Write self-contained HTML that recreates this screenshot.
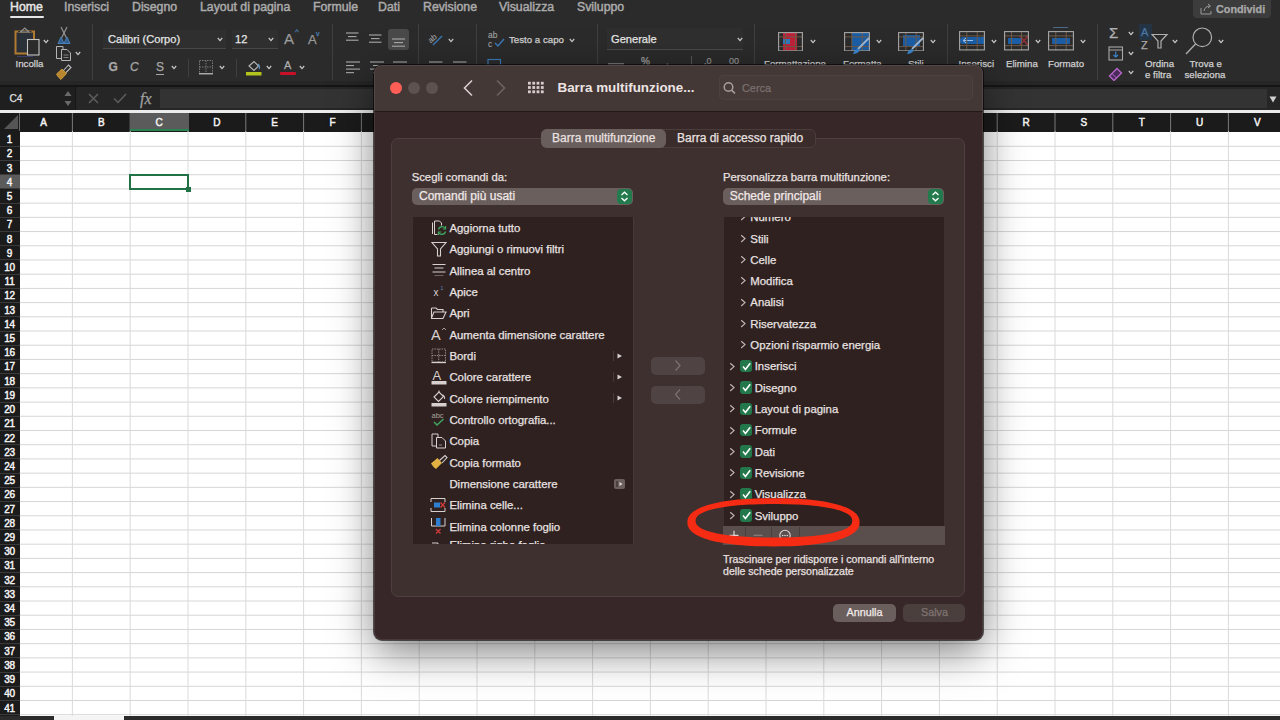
<!DOCTYPE html><html><head><meta charset="utf-8"><style>

*{margin:0;padding:0;box-sizing:border-box}
html,body{width:1280px;height:720px;overflow:hidden;background:#fff;font-family:"Liberation Sans", sans-serif}
.abs{position:absolute}
.t{position:absolute;white-space:nowrap;line-height:1;-webkit-text-stroke:0.25px currentColor}

</style></head><body>
<div class="abs" style="left:0;top:0;width:1280px;height:86px;background:#2b2b2b"></div>
<div class="abs" style="left:0;top:84px;width:1280px;height:3px;background:#151515"></div>
<div class="t" style="left:10px;top:0.5px;font-size:12.3px;color:#e6e6e6;-webkit-text-stroke:0.45px #e6e6e6">Home</div>
<div class="t" style="left:64px;top:0.5px;font-size:12.3px;color:#ababab;-webkit-text-stroke:0.45px #ababab">Inserisci</div>
<div class="t" style="left:132px;top:0.5px;font-size:12.3px;color:#ababab;-webkit-text-stroke:0.45px #ababab">Disegno</div>
<div class="t" style="left:200px;top:0.5px;font-size:12.3px;color:#ababab;-webkit-text-stroke:0.45px #ababab">Layout di pagina</div>
<div class="t" style="left:313px;top:0.5px;font-size:12.3px;color:#ababab;-webkit-text-stroke:0.45px #ababab">Formule</div>
<div class="t" style="left:378px;top:0.5px;font-size:12.3px;color:#ababab;-webkit-text-stroke:0.45px #ababab">Dati</div>
<div class="t" style="left:423px;top:0.5px;font-size:12.3px;color:#ababab;-webkit-text-stroke:0.45px #ababab">Revisione</div>
<div class="t" style="left:499px;top:0.5px;font-size:12.3px;color:#ababab;-webkit-text-stroke:0.45px #ababab">Visualizza</div>
<div class="t" style="left:577px;top:0.5px;font-size:12.3px;color:#ababab;-webkit-text-stroke:0.45px #ababab">Sviluppo</div>
<div class="abs" style="left:10px;top:16px;width:34px;height:2px;background:#e6e6e6;border-radius:1px"></div>
<div class="abs" style="left:1193px;top:0;width:78px;height:18px;background:#3c3c3c;border-radius:0 0 4px 4px"></div>
<svg class="abs" style="left:1200px;top:3px" width="13" height="12" viewBox="0 0 13 12"><path d="M1,5 V11 H11 V8" fill="none" stroke="#9a9a9a" stroke-width="1"/><path d="M4,8 Q5,3 10,3 M8,1 L10.5,3 L8,5" fill="none" stroke="#9a9a9a" stroke-width="1"/></svg>
<div class="t" style="left:1216px;top:3.5px;font-size:10.8px;font-weight:bold;color:#a9a9a9">Condividi</div>
<div class="abs" style="left:92px;top:24px;width:1px;height:56px;background:#3f3f3f"></div>
<div class="abs" style="left:332px;top:24px;width:1px;height:56px;background:#3f3f3f"></div>
<div class="abs" style="left:418px;top:24px;width:1px;height:56px;background:#3f3f3f"></div>
<div class="abs" style="left:476px;top:24px;width:1px;height:56px;background:#3f3f3f"></div>
<div class="abs" style="left:597px;top:24px;width:1px;height:56px;background:#3f3f3f"></div>
<div class="abs" style="left:754px;top:24px;width:1px;height:56px;background:#3f3f3f"></div>
<div class="abs" style="left:947px;top:24px;width:1px;height:56px;background:#3f3f3f"></div>
<div class="abs" style="left:1097px;top:24px;width:1px;height:56px;background:#3f3f3f"></div>
<div class="abs" style="left:0;top:80.5px;width:1280px;height:4px;background:#262626"></div>
<svg class="abs" style="left:13px;top:26px" width="30" height="32" viewBox="0 0 30 32"><rect x="2.5" y="5.5" width="18.5" height="22" fill="#2a3038" stroke="#b07a30" stroke-width="2"/><path d="M5,5.5 H18.5" stroke="#2a3038" stroke-width="1"/><polygon points="7.5,6 11.75,2 16,6" fill="none" stroke="#8f8f8f" stroke-width="1.2"/><rect x="14.5" y="13.5" width="11.5" height="15.5" fill="#2b2b2b" stroke="#c4c4c4" stroke-width="1.1"/><line x1="4" y1="30.5" x2="20" y2="30.5" stroke="#3a3f70" stroke-width="1"/></svg>
<svg class="abs" style="left:43px;top:38.5px" width="6" height="5" viewBox="0 0 6 5"><polyline points="0.8,1 3,3.6 5.2,1" fill="none" stroke="#c8c8c8" stroke-width="1.2"/></svg>
<div class="t" style="left:15.5px;top:58.9px;font-size:9.7px;color:#d0d0d0">Incolla</div>
<svg class="abs" style="left:56px;top:26px" width="16" height="20" viewBox="0 0 16 20"><line x1="5" y1="1" x2="10.5" y2="12" stroke="#9a9a9a" stroke-width="1.1"/><line x1="11" y1="1" x2="5.5" y2="12" stroke="#9a9a9a" stroke-width="1.1"/><path d="M2,17.5 L5,11 L8,17.5 Z M8,17.5 L11,11 L14,17.5 Z" fill="#2f5f90" stroke="#4a7fb5" stroke-width="1"/></svg>
<svg class="abs" style="left:55px;top:45px" width="17" height="17" viewBox="0 0 17 17"><path d="M1.5,1.5 H8 V13.5 H1.5 Z" fill="none" stroke="#b5b5b5" stroke-width="1"/><path d="M6.5,4.5 H12 L15.5,8 V15.5 H6.5 Z" fill="#2b2b2b" stroke="#b5b5b5" stroke-width="1"/><line x1="8.5" y1="10" x2="13.5" y2="10" stroke="#999" stroke-width="0.8"/><line x1="8.5" y1="12.5" x2="13.5" y2="12.5" stroke="#999" stroke-width="0.8"/></svg>
<svg class="abs" style="left:75px;top:50.5px" width="6" height="5" viewBox="0 0 6 5"><polyline points="0.8,1 3,3.6 5.2,1" fill="none" stroke="#c8c8c8" stroke-width="1.2"/></svg>
<svg class="abs" style="left:55px;top:63px" width="17" height="18" viewBox="0 0 17 18"><path d="M1.5,11 L7,6 L11.5,10.5 L6,16.5 Q3,14.5 1.5,11 Z" fill="#b8862e" stroke="#d9a640" stroke-width="0.8"/><path d="M8.5,7.5 L13.5,2 L16,4.5 L11,9.5" fill="none" stroke="#bdbdbd" stroke-width="1.1"/></svg>
<div class="abs" style="left:103px;top:30px;width:123px;height:19px;background:#2f2f2f;border-bottom:1px solid #474747"></div>
<div class="t" style="left:108px;top:33.5px;font-size:11.1px;color:#e6e6e6">Calibri (Corpo)</div>
<svg class="abs" style="left:217px;top:37.0px" width="6" height="5" viewBox="0 0 6 5"><polyline points="0.8,1 3,3.6 5.2,1" fill="none" stroke="#c8c8c8" stroke-width="1.2"/></svg>
<div class="abs" style="left:232px;top:30px;width:45.5px;height:19px;background:#2f2f2f;border-bottom:1px solid #474747"></div>
<div class="t" style="left:235px;top:33.5px;font-size:11.1px;color:#e6e6e6">12</div>
<svg class="abs" style="left:267.5px;top:37.0px" width="6" height="5" viewBox="0 0 6 5"><polyline points="0.8,1 3,3.6 5.2,1" fill="none" stroke="#c8c8c8" stroke-width="1.2"/></svg>
<div class="t" style="left:284px;top:31px;font-size:15px;color:#9a9a9a">A</div>
<div class="t" style="left:295px;top:28px;font-size:8px;color:#4a7fb5">^</div>
<div class="t" style="left:308px;top:33px;font-size:13px;color:#9a9a9a">A</div>
<div class="t" style="left:316px;top:30px;font-size:7px;color:#4a7fb5">v</div>
<div class="t" style="left:108.5px;top:61px;font-size:12px;font-weight:bold;color:#a8a8a8">G</div>
<div class="t" style="left:130px;top:61px;font-size:12px;font-style:italic;color:#a8a8a8">C</div>
<div class="t" style="left:156px;top:61px;font-size:12px;color:#a8a8a8">S</div>
<div class="abs" style="left:156px;top:73.5px;width:8px;height:1px;background:#a8a8a8"></div>
<svg class="abs" style="left:171px;top:64.5px" width="6" height="5" viewBox="0 0 6 5"><polyline points="0.8,1 3,3.6 5.2,1" fill="none" stroke="#c8c8c8" stroke-width="1.2"/></svg>
<div class="abs" style="left:187.5px;top:59px;width:1px;height:18px;background:#3f3f3f"></div>
<svg class="abs" style="left:199px;top:60px" width="15" height="15" viewBox="0 0 15 15"><rect x="0.5" y="0.5" width="13" height="13" fill="none" stroke="#8a8a8a" stroke-width="0.8" stroke-dasharray="1.5,1"/><line x1="7" y1="0.5" x2="7" y2="13.5" stroke="#8a8a8a" stroke-width="0.8" stroke-dasharray="1.5,1"/><line x1="0.5" y1="7" x2="13.5" y2="7" stroke="#8a8a8a" stroke-width="0.8" stroke-dasharray="1.5,1"/><line x1="0" y1="13.8" x2="14" y2="13.8" stroke="#c0c0c0" stroke-width="1.2"/></svg>
<svg class="abs" style="left:219px;top:64.5px" width="6" height="5" viewBox="0 0 6 5"><polyline points="0.8,1 3,3.6 5.2,1" fill="none" stroke="#c8c8c8" stroke-width="1.2"/></svg>
<div class="abs" style="left:235.5px;top:59px;width:1px;height:18px;background:#3f3f3f"></div>
<svg class="abs" style="left:245px;top:60px" width="18" height="16" viewBox="0 0 18 16"><path d="M4,6 L9,1.5 L13.5,6 L9,10.5 Z" fill="none" stroke="#b8b8b8" stroke-width="1.1"/><path d="M13,4 Q15.5,7 14,9" fill="none" stroke="#5a8fc0" stroke-width="1.2"/><rect x="1" y="12" width="15.5" height="3.5" fill="#b4c21e"/></svg>
<svg class="abs" style="left:266px;top:64.5px" width="6" height="5" viewBox="0 0 6 5"><polyline points="0.8,1 3,3.6 5.2,1" fill="none" stroke="#c8c8c8" stroke-width="1.2"/></svg>
<div class="t" style="left:284px;top:60px;font-size:11px;color:#b0b0b0">A</div>
<div class="abs" style="left:280px;top:71.5px;width:16px;height:3.5px;background:#c8102a;border-radius:1px"></div>
<svg class="abs" style="left:299px;top:64.5px" width="6" height="5" viewBox="0 0 6 5"><polyline points="0.8,1 3,3.6 5.2,1" fill="none" stroke="#c8c8c8" stroke-width="1.2"/></svg>
<svg class="abs" style="left:346px;top:32px" width="16" height="14" viewBox="0 0 16 14"><line x1="0" y1="1.0" x2="12.5" y2="1.0" stroke="#ababab" stroke-width="1.1"/><line x1="2" y1="4.6" x2="10.5" y2="4.6" stroke="#ababab" stroke-width="1.1"/><line x1="0" y1="8.2" x2="12.5" y2="8.2" stroke="#ababab" stroke-width="1.1"/></svg>
<svg class="abs" style="left:369px;top:34px" width="16" height="14" viewBox="0 0 16 14"><line x1="0" y1="1.0" x2="12.5" y2="1.0" stroke="#ababab" stroke-width="1.1"/><line x1="2" y1="4.6" x2="10.5" y2="4.6" stroke="#ababab" stroke-width="1.1"/><line x1="0" y1="8.2" x2="12.5" y2="8.2" stroke="#ababab" stroke-width="1.1"/></svg>
<div class="abs" style="left:388.4px;top:28.7px;width:21.1px;height:21.3px;background:#4a4a4a;border-radius:3px"></div>
<svg class="abs" style="left:392px;top:38px" width="16" height="14" viewBox="0 0 16 14"><line x1="0" y1="1.0" x2="13" y2="1.0" stroke="#ababab" stroke-width="1.1"/><line x1="2" y1="4.6" x2="11" y2="4.6" stroke="#ababab" stroke-width="1.1"/><line x1="0" y1="8.2" x2="13" y2="8.2" stroke="#ababab" stroke-width="1.1"/></svg>
<svg class="abs" style="left:345.5px;top:61px" width="16" height="14" viewBox="0 0 16 14"><line x1="0" y1="1.0" x2="14" y2="1.0" stroke="#ababab" stroke-width="1.1"/><line x1="0" y1="4.55" x2="8" y2="4.55" stroke="#ababab" stroke-width="1.1"/><line x1="0" y1="8.1" x2="14" y2="8.1" stroke="#ababab" stroke-width="1.1"/><line x1="0" y1="11.649999999999999" x2="8" y2="11.649999999999999" stroke="#ababab" stroke-width="1.1"/></svg>
<svg class="abs" style="left:369.5px;top:61px" width="16" height="14" viewBox="0 0 16 14"><line x1="0" y1="1.0" x2="14" y2="1.0" stroke="#ababab" stroke-width="1.1"/><line x1="3" y1="4.55" x2="11" y2="4.55" stroke="#ababab" stroke-width="1.1"/><line x1="0" y1="8.1" x2="14" y2="8.1" stroke="#ababab" stroke-width="1.1"/><line x1="3" y1="11.649999999999999" x2="11" y2="11.649999999999999" stroke="#ababab" stroke-width="1.1"/></svg>
<svg class="abs" style="left:392.5px;top:61px" width="16" height="14" viewBox="0 0 16 14"><line x1="0" y1="1.0" x2="14" y2="1.0" stroke="#ababab" stroke-width="1.1"/></svg>
<div class="abs" style="left:418px;top:28px;width:1px;height:18px;background:#3f3f3f"></div>
<div class="abs" style="left:418px;top:58px;width:1px;height:8px;background:#3f3f3f"></div>
<svg class="abs" style="left:427px;top:30px" width="18" height="18" viewBox="0 0 18 18"><text x="1" y="10" font-size="8" fill="#b0b0b0" font-family="Liberation Sans" transform="rotate(-40 7 8)">ab</text><line x1="6" y1="15" x2="15" y2="6" stroke="#3a78b5" stroke-width="1.5"/></svg>
<svg class="abs" style="left:448px;top:37.5px" width="6" height="5" viewBox="0 0 6 5"><polyline points="0.8,1 3,3.6 5.2,1" fill="none" stroke="#c8c8c8" stroke-width="1.2"/></svg>
<svg class="abs" style="left:428.5px;top:61px" width="16" height="14" viewBox="0 0 16 14"><line x1="0" y1="1.0" x2="13.5" y2="1.0" stroke="#ababab" stroke-width="1.1"/></svg>
<svg class="abs" style="left:452.5px;top:61px" width="16" height="14" viewBox="0 0 16 14"><line x1="0" y1="1.0" x2="13.5" y2="1.0" stroke="#ababab" stroke-width="1.1"/></svg>
<svg class="abs" style="left:487px;top:30px" width="20" height="19" viewBox="0 0 20 19"><text x="1" y="8" font-size="8.5" fill="#b0b0b0" font-family="Liberation Sans">ab</text><text x="1" y="16.5" font-size="8.5" fill="#b0b0b0" font-family="Liberation Sans">c</text><path d="M8,13 L11,16 L17,9" fill="none" stroke="#3a78b5" stroke-width="1.5"/></svg>
<div class="t" style="left:509px;top:35px;font-size:9.7px;color:#d0d0d0">Testo a capo</div>
<svg class="abs" style="left:569px;top:37.5px" width="6" height="5" viewBox="0 0 6 5"><polyline points="0.8,1 3,3.6 5.2,1" fill="none" stroke="#c8c8c8" stroke-width="1.2"/></svg>
<svg class="abs" style="left:487px;top:58px" width="15" height="8" viewBox="0 0 15 8"><rect x="1" y="1.5" width="12.5" height="6" fill="none" stroke="#3a78b5" stroke-width="1.2"/></svg>
<div class="abs" style="left:607.2px;top:27.7px;width:136px;height:21.9px;background:#2f2f2f;border-bottom:1px solid #4a4a4a"></div>
<div class="t" style="left:611px;top:33.5px;font-size:11.1px;color:#e6e6e6">Generale</div>
<svg class="abs" style="left:736.5px;top:37.0px" width="6" height="5" viewBox="0 0 6 5"><polyline points="0.8,1 3,3.6 5.2,1" fill="none" stroke="#c8c8c8" stroke-width="1.2"/></svg>
<svg class="abs" style="left:608px;top:62.5px" width="16" height="14" viewBox="0 0 16 14"><line x1="0" y1="1.0" x2="16" y2="1.0" stroke="#b0b0b0" stroke-width="1.1"/></svg>
<div class="t" style="left:641px;top:56.5px;font-size:10px;color:#a0a0a0">%</div>
<div class="t" style="left:666px;top:56.5px;font-size:10px;color:#a0a0a0">,</div>
<div class="abs" style="left:691px;top:56px;width:1px;height:9px;background:#555"></div>
<div class="t" style="left:704px;top:56.5px;font-size:9px;color:#909090">,0</div>
<div class="t" style="left:729px;top:56.5px;font-size:9px;color:#909090">00</div>
<svg class="abs" style="left:778px;top:31.5px" width="25" height="19.5" viewBox="0 0 25 19.5"><rect x="5" y="1" width="14" height="17.5" fill="#c0213a"/><rect x="5" y="7" width="7" height="5" fill="#2f7ab8"/><line x1="7.5" y1="0" x2="7.5" y2="19.5" stroke="#6f5a48" stroke-width="1"/><line x1="17.5" y1="0" x2="17.5" y2="19.5" stroke="#6f5a48" stroke-width="1"/><line x1="0" y1="4.9" x2="25" y2="4.9" stroke="#6f5a48" stroke-width="1"/><line x1="0" y1="14.6" x2="25" y2="14.6" stroke="#6f5a48" stroke-width="1"/><rect x="0.6" y="0.6" width="23.8" height="18.3" fill="none" stroke="#a8a8a8" stroke-width="1.1"/></svg>
<svg class="abs" style="left:810px;top:39.0px" width="6" height="5" viewBox="0 0 6 5"><polyline points="0.8,1 3,3.6 5.2,1" fill="none" stroke="#c8c8c8" stroke-width="1.2"/></svg>
<svg class="abs" style="left:844px;top:31.5px" width="26" height="19.5" viewBox="0 0 26 19.5"><rect x="8" y="1" width="17" height="17.5" fill="#1b5ea6"/><line x1="7.8" y1="0" x2="7.8" y2="19.5" stroke="#6f5a48" stroke-width="1"/><line x1="18.2" y1="0" x2="18.2" y2="19.5" stroke="#6f5a48" stroke-width="1"/><line x1="0" y1="4.9" x2="26" y2="4.9" stroke="#6f5a48" stroke-width="1"/><line x1="0" y1="14.6" x2="26" y2="14.6" stroke="#6f5a48" stroke-width="1"/><rect x="0.6" y="0.6" width="24.8" height="18.3" fill="none" stroke="#a8a8a8" stroke-width="1.1"/></svg>
<svg class="abs" style="left:850px;top:36px" width="22" height="20" viewBox="0 0 22 20"><line x1="19" y1="2" x2="8" y2="13" stroke="#a0b8d0" stroke-width="1.8"/><path d="M8,13 Q4,14 3,18 Q7,18 9.5,15 Z" fill="#3a86d0"/></svg>
<svg class="abs" style="left:876px;top:39.0px" width="6" height="5" viewBox="0 0 6 5"><polyline points="0.8,1 3,3.6 5.2,1" fill="none" stroke="#c8c8c8" stroke-width="1.2"/></svg>
<svg class="abs" style="left:898px;top:31.5px" width="26" height="19.5" viewBox="0 0 26 19.5"><rect x="5" y="3" width="17" height="11" fill="#1b5ea6"/><line x1="7.8" y1="0" x2="7.8" y2="19.5" stroke="#6f5a48" stroke-width="1"/><line x1="18.2" y1="0" x2="18.2" y2="19.5" stroke="#6f5a48" stroke-width="1"/><line x1="0" y1="4.9" x2="26" y2="4.9" stroke="#6f5a48" stroke-width="1"/><line x1="0" y1="14.6" x2="26" y2="14.6" stroke="#6f5a48" stroke-width="1"/><rect x="0.6" y="0.6" width="24.8" height="18.3" fill="none" stroke="#a8a8a8" stroke-width="1.1"/></svg>
<svg class="abs" style="left:904px;top:36px" width="22" height="20" viewBox="0 0 22 20"><line x1="19" y1="2" x2="8" y2="13" stroke="#a0b8d0" stroke-width="1.8"/><path d="M8,13 Q4,14 3,18 Q7,18 9.5,15 Z" fill="#3a86d0"/></svg>
<svg class="abs" style="left:930px;top:39.0px" width="6" height="5" viewBox="0 0 6 5"><polyline points="0.8,1 3,3.6 5.2,1" fill="none" stroke="#c8c8c8" stroke-width="1.2"/></svg>
<div class="t" style="left:764px;top:58.9px;font-size:9.7px;color:#d0d0d0">Formattazione</div>
<div class="t" style="left:843px;top:58.9px;font-size:9.7px;color:#d0d0d0">Formatta</div>
<div class="t" style="left:908px;top:58.9px;font-size:9.7px;color:#d0d0d0">Stili</div>
<svg class="abs" style="left:959px;top:31px" width="26" height="19.5" viewBox="0 0 26 19.5"><rect x="1" y="6" width="27" height="7" rx="3" fill="#1b5ea6"/><path d="M4,9.5 H14 M4,9.5 L7,7 M4,9.5 L7,12" stroke="#9ec3ea" stroke-width="1" fill="none"/><line x1="7.8" y1="0" x2="7.8" y2="19.5" stroke="#6f5a48" stroke-width="1"/><line x1="18.2" y1="0" x2="18.2" y2="19.5" stroke="#6f5a48" stroke-width="1"/><line x1="0" y1="4.9" x2="26" y2="4.9" stroke="#6f5a48" stroke-width="1"/><line x1="0" y1="14.6" x2="26" y2="14.6" stroke="#6f5a48" stroke-width="1"/><rect x="0.6" y="0.6" width="24.8" height="18.3" fill="none" stroke="#a8a8a8" stroke-width="1.1"/></svg>
<svg class="abs" style="left:991px;top:39.0px" width="6" height="5" viewBox="0 0 6 5"><polyline points="0.8,1 3,3.6 5.2,1" fill="none" stroke="#c8c8c8" stroke-width="1.2"/></svg>
<svg class="abs" style="left:1004px;top:31px" width="25" height="19.5" viewBox="0 0 25 19.5"><rect x="4" y="7" width="14" height="6" fill="#1b5ea6"/><path d="M16,5 L24,14 M24,5 L16,14" stroke="#8e2f36" stroke-width="1.8"/><line x1="7.5" y1="0" x2="7.5" y2="19.5" stroke="#6f5a48" stroke-width="1"/><line x1="17.5" y1="0" x2="17.5" y2="19.5" stroke="#6f5a48" stroke-width="1"/><line x1="0" y1="4.9" x2="25" y2="4.9" stroke="#6f5a48" stroke-width="1"/><line x1="0" y1="14.6" x2="25" y2="14.6" stroke="#6f5a48" stroke-width="1"/><rect x="0.6" y="0.6" width="23.8" height="18.3" fill="none" stroke="#a8a8a8" stroke-width="1.1"/></svg>
<svg class="abs" style="left:1035px;top:39.0px" width="6" height="5" viewBox="0 0 6 5"><polyline points="0.8,1 3,3.6 5.2,1" fill="none" stroke="#c8c8c8" stroke-width="1.2"/></svg>
<svg class="abs" style="left:1048px;top:31px" width="26" height="19.5" viewBox="0 0 26 19.5"><rect x="4" y="7" width="18" height="6" fill="#1b5ea6"/><line x1="7.8" y1="0" x2="7.8" y2="19.5" stroke="#6f5a48" stroke-width="1"/><line x1="18.2" y1="0" x2="18.2" y2="19.5" stroke="#6f5a48" stroke-width="1"/><line x1="0" y1="4.9" x2="26" y2="4.9" stroke="#6f5a48" stroke-width="1"/><line x1="0" y1="14.6" x2="26" y2="14.6" stroke="#6f5a48" stroke-width="1"/><rect x="0.6" y="0.6" width="24.8" height="18.3" fill="none" stroke="#a8a8a8" stroke-width="1.1"/></svg>
<div class="abs" style="left:1053px;top:26.5px;width:15px;height:1px;background:#4a6a8a"></div>
<svg class="abs" style="left:1080px;top:39.0px" width="6" height="5" viewBox="0 0 6 5"><polyline points="0.8,1 3,3.6 5.2,1" fill="none" stroke="#c8c8c8" stroke-width="1.2"/></svg>
<div class="t" style="left:958.5px;top:58.9px;font-size:9.7px;color:#d0d0d0">Inserisci</div>
<div class="t" style="left:1006px;top:58.9px;font-size:9.7px;color:#d0d0d0">Elimina</div>
<div class="t" style="left:1048px;top:58.9px;font-size:9.7px;color:#d0d0d0">Formato</div>
<div class="t" style="left:1109px;top:25px;font-size:15px;color:#b0b0b0">&#931;</div>
<svg class="abs" style="left:1128px;top:30.5px" width="6" height="5" viewBox="0 0 6 5"><polyline points="0.8,1 3,3.6 5.2,1" fill="none" stroke="#c8c8c8" stroke-width="1.2"/></svg>
<svg class="abs" style="left:1108px;top:46px" width="16" height="15" viewBox="0 0 16 15"><rect x="1" y="1" width="13.5" height="13" fill="none" stroke="#a8a8a8" stroke-width="1.1"/><line x1="1" y1="4" x2="14.5" y2="4" stroke="#a8a8a8" stroke-width="1"/><path d="M7.75,5.5 V11 M5.5,9 L7.75,11 L10,9" stroke="#3a86d0" stroke-width="1.1" fill="none"/></svg>
<svg class="abs" style="left:1128px;top:50.5px" width="6" height="5" viewBox="0 0 6 5"><polyline points="0.8,1 3,3.6 5.2,1" fill="none" stroke="#c8c8c8" stroke-width="1.2"/></svg>
<svg class="abs" style="left:1107px;top:65px" width="17" height="16" viewBox="0 0 17 16"><path d="M2.5,11 L10,3.5 L14.5,8 L7,15.5 Z" fill="#4a2a5a" stroke="#b565c8" stroke-width="1.4"/><path d="M5,8.5 L9.5,13" stroke="#b565c8" stroke-width="1"/></svg>
<svg class="abs" style="left:1128px;top:69.5px" width="6" height="5" viewBox="0 0 6 5"><polyline points="0.8,1 3,3.6 5.2,1" fill="none" stroke="#c8c8c8" stroke-width="1.2"/></svg>
<div class="abs" style="left:1139px;top:24px;width:13px;height:16px;background:#253444"></div>
<div class="t" style="left:1141px;top:27px;font-size:11px;color:#4a78a8">A</div>
<div class="t" style="left:1141px;top:40px;font-size:11px;color:#a8a8a8">Z</div>
<svg class="abs" style="left:1151px;top:33px" width="18" height="17" viewBox="0 0 18 17"><path d="M1,1.5 H16 L10,8 V15 H7 V8 Z" fill="none" stroke="#b0b0b0" stroke-width="1.2"/></svg>
<svg class="abs" style="left:1172px;top:38.5px" width="6" height="5" viewBox="0 0 6 5"><polyline points="0.8,1 3,3.6 5.2,1" fill="none" stroke="#c8c8c8" stroke-width="1.2"/></svg>
<div class="t" style="left:1145px;top:58.9px;font-size:9.7px;color:#d0d0d0">Ordina</div>
<div class="t" style="left:1145px;top:69.5px;font-size:9.7px;color:#d0d0d0">e filtra</div>
<svg class="abs" style="left:1184px;top:26px" width="30" height="30" viewBox="0 0 30 30"><circle cx="18.3" cy="11.3" r="9.3" fill="none" stroke="#b0b0b0" stroke-width="1.2"/><line x1="11.5" y1="18" x2="2" y2="28" stroke="#b0b0b0" stroke-width="1.3"/></svg>
<svg class="abs" style="left:1218px;top:38.5px" width="6" height="5" viewBox="0 0 6 5"><polyline points="0.8,1 3,3.6 5.2,1" fill="none" stroke="#c8c8c8" stroke-width="1.2"/></svg>
<div class="t" style="left:1189.5px;top:58.9px;font-size:9.7px;color:#d0d0d0">Trova e</div>
<div class="t" style="left:1184.5px;top:69.5px;font-size:9.7px;color:#d0d0d0">seleziona</div>
<div class="abs" style="left:0;top:87px;width:1280px;height:23px;background:#262626"></div>
<div class="abs" style="left:0;top:87px;width:75px;height:23px;background:#1f1f1f"></div>
<div class="t" style="left:9.5px;top:93.5px;font-size:10.2px;color:#e0e0e0">C4</div>
<div class="abs" style="left:160px;top:89px;width:1107px;height:19px;background:#333"></div>
<svg class="abs" style="left:64px;top:90px" width="8" height="18" viewBox="0 0 8 18"><polygon points="0.5,6 4,1 7.5,6" fill="#6a6a6a"/><polygon points="0.5,11 4,16 7.5,11" fill="#6a6a6a"/></svg>
<div class="abs" style="left:74.5px;top:87px;width:1px;height:23px;background:#161616"></div>
<svg class="abs" style="left:88px;top:93px" width="11" height="11" viewBox="0 0 11 11"><path d="M1,1 L10,10 M10,1 L1,10" stroke="#5e5e5e" stroke-width="1.5"/></svg>
<svg class="abs" style="left:113px;top:93px" width="14" height="11" viewBox="0 0 14 11"><path d="M1,5.5 L5,9.5 L13,1" fill="none" stroke="#5e5e5e" stroke-width="1.5"/></svg>
<div class="t" style="left:140px;top:90.5px;font-size:16px;font-style:italic;font-family:Liberation Serif;color:#a0a0a0">fx</div>
<svg class="abs" style="left:1269px;top:96px" width="8" height="7" viewBox="0 0 8 7"><polygon points="0.5,0.5 7.5,0.5 4,6.5" fill="#d0d0d0"/></svg>
<div class="abs" style="left:0;top:110px;width:1280px;height:2.8px;background:#ececec"></div>
<div class="abs" style="left:0;top:112.5px;width:1280px;height:19px;background:#1b1b1b"></div>
<div class="abs" style="left:0;top:131px;width:19.6px;height:589px;background:#1b1b1b"></div>
<svg class="abs" style="left:0;top:0" width="1280" height="720"><line x1="19.6" x2="1280" y1="146.30" y2="146.30" stroke="#d6d6d6" stroke-width="1"/><line x1="19.6" x2="1280" y1="160.51" y2="160.51" stroke="#d6d6d6" stroke-width="1"/><line x1="19.6" x2="1280" y1="174.72" y2="174.72" stroke="#d6d6d6" stroke-width="1"/><line x1="19.6" x2="1280" y1="188.93" y2="188.93" stroke="#d6d6d6" stroke-width="1"/><line x1="19.6" x2="1280" y1="203.14" y2="203.14" stroke="#d6d6d6" stroke-width="1"/><line x1="19.6" x2="1280" y1="217.35" y2="217.35" stroke="#d6d6d6" stroke-width="1"/><line x1="19.6" x2="1280" y1="231.56" y2="231.56" stroke="#d6d6d6" stroke-width="1"/><line x1="19.6" x2="1280" y1="245.77" y2="245.77" stroke="#d6d6d6" stroke-width="1"/><line x1="19.6" x2="1280" y1="259.98" y2="259.98" stroke="#d6d6d6" stroke-width="1"/><line x1="19.6" x2="1280" y1="274.19" y2="274.19" stroke="#d6d6d6" stroke-width="1"/><line x1="19.6" x2="1280" y1="288.40" y2="288.40" stroke="#d6d6d6" stroke-width="1"/><line x1="19.6" x2="1280" y1="302.61" y2="302.61" stroke="#d6d6d6" stroke-width="1"/><line x1="19.6" x2="1280" y1="316.82" y2="316.82" stroke="#d6d6d6" stroke-width="1"/><line x1="19.6" x2="1280" y1="331.03" y2="331.03" stroke="#d6d6d6" stroke-width="1"/><line x1="19.6" x2="1280" y1="345.24" y2="345.24" stroke="#d6d6d6" stroke-width="1"/><line x1="19.6" x2="1280" y1="359.45" y2="359.45" stroke="#d6d6d6" stroke-width="1"/><line x1="19.6" x2="1280" y1="373.66" y2="373.66" stroke="#d6d6d6" stroke-width="1"/><line x1="19.6" x2="1280" y1="387.87" y2="387.87" stroke="#d6d6d6" stroke-width="1"/><line x1="19.6" x2="1280" y1="402.08" y2="402.08" stroke="#d6d6d6" stroke-width="1"/><line x1="19.6" x2="1280" y1="416.29" y2="416.29" stroke="#d6d6d6" stroke-width="1"/><line x1="19.6" x2="1280" y1="430.50" y2="430.50" stroke="#d6d6d6" stroke-width="1"/><line x1="19.6" x2="1280" y1="444.71" y2="444.71" stroke="#d6d6d6" stroke-width="1"/><line x1="19.6" x2="1280" y1="458.92" y2="458.92" stroke="#d6d6d6" stroke-width="1"/><line x1="19.6" x2="1280" y1="473.13" y2="473.13" stroke="#d6d6d6" stroke-width="1"/><line x1="19.6" x2="1280" y1="487.34" y2="487.34" stroke="#d6d6d6" stroke-width="1"/><line x1="19.6" x2="1280" y1="501.55" y2="501.55" stroke="#d6d6d6" stroke-width="1"/><line x1="19.6" x2="1280" y1="515.76" y2="515.76" stroke="#d6d6d6" stroke-width="1"/><line x1="19.6" x2="1280" y1="529.97" y2="529.97" stroke="#d6d6d6" stroke-width="1"/><line x1="19.6" x2="1280" y1="544.18" y2="544.18" stroke="#d6d6d6" stroke-width="1"/><line x1="19.6" x2="1280" y1="558.39" y2="558.39" stroke="#d6d6d6" stroke-width="1"/><line x1="19.6" x2="1280" y1="572.60" y2="572.60" stroke="#d6d6d6" stroke-width="1"/><line x1="19.6" x2="1280" y1="586.81" y2="586.81" stroke="#d6d6d6" stroke-width="1"/><line x1="19.6" x2="1280" y1="601.02" y2="601.02" stroke="#d6d6d6" stroke-width="1"/><line x1="19.6" x2="1280" y1="615.23" y2="615.23" stroke="#d6d6d6" stroke-width="1"/><line x1="19.6" x2="1280" y1="629.44" y2="629.44" stroke="#d6d6d6" stroke-width="1"/><line x1="19.6" x2="1280" y1="643.65" y2="643.65" stroke="#d6d6d6" stroke-width="1"/><line x1="19.6" x2="1280" y1="657.86" y2="657.86" stroke="#d6d6d6" stroke-width="1"/><line x1="19.6" x2="1280" y1="672.07" y2="672.07" stroke="#d6d6d6" stroke-width="1"/><line x1="19.6" x2="1280" y1="686.28" y2="686.28" stroke="#d6d6d6" stroke-width="1"/><line x1="19.6" x2="1280" y1="700.49" y2="700.49" stroke="#d6d6d6" stroke-width="1"/><line x1="19.6" x2="1280" y1="714.70" y2="714.70" stroke="#d6d6d6" stroke-width="1"/><line x1="19.6" x2="1280" y1="728.91" y2="728.91" stroke="#d6d6d6" stroke-width="1"/><line x1="72.40" x2="72.40" y1="131" y2="716" stroke="#dadada" stroke-width="1"/><line x1="72.40" x2="72.40" y1="113" y2="131" stroke="#7a7a7a" stroke-width="1"/><line x1="130.20" x2="130.20" y1="131" y2="716" stroke="#dadada" stroke-width="1"/><line x1="130.20" x2="130.20" y1="113" y2="131" stroke="#7a7a7a" stroke-width="1"/><line x1="188.00" x2="188.00" y1="131" y2="716" stroke="#dadada" stroke-width="1"/><line x1="188.00" x2="188.00" y1="113" y2="131" stroke="#7a7a7a" stroke-width="1"/><line x1="245.80" x2="245.80" y1="131" y2="716" stroke="#dadada" stroke-width="1"/><line x1="245.80" x2="245.80" y1="113" y2="131" stroke="#7a7a7a" stroke-width="1"/><line x1="303.60" x2="303.60" y1="131" y2="716" stroke="#dadada" stroke-width="1"/><line x1="303.60" x2="303.60" y1="113" y2="131" stroke="#7a7a7a" stroke-width="1"/><line x1="361.40" x2="361.40" y1="131" y2="716" stroke="#dadada" stroke-width="1"/><line x1="361.40" x2="361.40" y1="113" y2="131" stroke="#7a7a7a" stroke-width="1"/><line x1="419.20" x2="419.20" y1="131" y2="716" stroke="#dadada" stroke-width="1"/><line x1="419.20" x2="419.20" y1="113" y2="131" stroke="#7a7a7a" stroke-width="1"/><line x1="477.00" x2="477.00" y1="131" y2="716" stroke="#dadada" stroke-width="1"/><line x1="477.00" x2="477.00" y1="113" y2="131" stroke="#7a7a7a" stroke-width="1"/><line x1="534.80" x2="534.80" y1="131" y2="716" stroke="#dadada" stroke-width="1"/><line x1="534.80" x2="534.80" y1="113" y2="131" stroke="#7a7a7a" stroke-width="1"/><line x1="592.60" x2="592.60" y1="131" y2="716" stroke="#dadada" stroke-width="1"/><line x1="592.60" x2="592.60" y1="113" y2="131" stroke="#7a7a7a" stroke-width="1"/><line x1="650.40" x2="650.40" y1="131" y2="716" stroke="#dadada" stroke-width="1"/><line x1="650.40" x2="650.40" y1="113" y2="131" stroke="#7a7a7a" stroke-width="1"/><line x1="708.20" x2="708.20" y1="131" y2="716" stroke="#dadada" stroke-width="1"/><line x1="708.20" x2="708.20" y1="113" y2="131" stroke="#7a7a7a" stroke-width="1"/><line x1="766.00" x2="766.00" y1="131" y2="716" stroke="#dadada" stroke-width="1"/><line x1="766.00" x2="766.00" y1="113" y2="131" stroke="#7a7a7a" stroke-width="1"/><line x1="823.80" x2="823.80" y1="131" y2="716" stroke="#dadada" stroke-width="1"/><line x1="823.80" x2="823.80" y1="113" y2="131" stroke="#7a7a7a" stroke-width="1"/><line x1="881.60" x2="881.60" y1="131" y2="716" stroke="#dadada" stroke-width="1"/><line x1="881.60" x2="881.60" y1="113" y2="131" stroke="#7a7a7a" stroke-width="1"/><line x1="939.40" x2="939.40" y1="131" y2="716" stroke="#dadada" stroke-width="1"/><line x1="939.40" x2="939.40" y1="113" y2="131" stroke="#7a7a7a" stroke-width="1"/><line x1="997.20" x2="997.20" y1="131" y2="716" stroke="#dadada" stroke-width="1"/><line x1="997.20" x2="997.20" y1="113" y2="131" stroke="#7a7a7a" stroke-width="1"/><line x1="1055.00" x2="1055.00" y1="131" y2="716" stroke="#dadada" stroke-width="1"/><line x1="1055.00" x2="1055.00" y1="113" y2="131" stroke="#7a7a7a" stroke-width="1"/><line x1="1112.80" x2="1112.80" y1="131" y2="716" stroke="#dadada" stroke-width="1"/><line x1="1112.80" x2="1112.80" y1="113" y2="131" stroke="#7a7a7a" stroke-width="1"/><line x1="1170.60" x2="1170.60" y1="131" y2="716" stroke="#dadada" stroke-width="1"/><line x1="1170.60" x2="1170.60" y1="113" y2="131" stroke="#7a7a7a" stroke-width="1"/><line x1="1228.40" x2="1228.40" y1="131" y2="716" stroke="#dadada" stroke-width="1"/><line x1="1228.40" x2="1228.40" y1="113" y2="131" stroke="#7a7a7a" stroke-width="1"/><line x1="1286.20" x2="1286.20" y1="131" y2="716" stroke="#dadada" stroke-width="1"/><line x1="1286.20" x2="1286.20" y1="113" y2="131" stroke="#7a7a7a" stroke-width="1"/></svg>
<div class="t" style="left:23.5px;width:40px;text-align:center;top:117.5px;font-size:10px;color:#f4f4f4;-webkit-text-stroke:0.45px #f4f4f4">A</div>
<div class="t" style="left:81.3px;width:40px;text-align:center;top:117.5px;font-size:10px;color:#f4f4f4;-webkit-text-stroke:0.45px #f4f4f4">B</div>
<div class="abs" style="left:130px;top:112.5px;width:58.5px;height:18.5px;background:#5b5b5b;border-bottom:2px solid #2a8152"></div>
<div class="t" style="left:139.1px;width:40px;text-align:center;top:117.5px;font-size:10px;color:#f4f4f4;-webkit-text-stroke:0.45px #f4f4f4">C</div>
<div class="t" style="left:196.9px;width:40px;text-align:center;top:117.5px;font-size:10px;color:#f4f4f4;-webkit-text-stroke:0.45px #f4f4f4">D</div>
<div class="t" style="left:254.7px;width:40px;text-align:center;top:117.5px;font-size:10px;color:#f4f4f4;-webkit-text-stroke:0.45px #f4f4f4">E</div>
<div class="t" style="left:312.5px;width:40px;text-align:center;top:117.5px;font-size:10px;color:#f4f4f4;-webkit-text-stroke:0.45px #f4f4f4">F</div>
<div class="t" style="left:370.3px;width:40px;text-align:center;top:117.5px;font-size:10px;color:#f4f4f4;-webkit-text-stroke:0.45px #f4f4f4">G</div>
<div class="t" style="left:428.1px;width:40px;text-align:center;top:117.5px;font-size:10px;color:#f4f4f4;-webkit-text-stroke:0.45px #f4f4f4">H</div>
<div class="t" style="left:485.9px;width:40px;text-align:center;top:117.5px;font-size:10px;color:#f4f4f4;-webkit-text-stroke:0.45px #f4f4f4">I</div>
<div class="t" style="left:543.7px;width:40px;text-align:center;top:117.5px;font-size:10px;color:#f4f4f4;-webkit-text-stroke:0.45px #f4f4f4">J</div>
<div class="t" style="left:601.5px;width:40px;text-align:center;top:117.5px;font-size:10px;color:#f4f4f4;-webkit-text-stroke:0.45px #f4f4f4">K</div>
<div class="t" style="left:659.3px;width:40px;text-align:center;top:117.5px;font-size:10px;color:#f4f4f4;-webkit-text-stroke:0.45px #f4f4f4">L</div>
<div class="t" style="left:717.1px;width:40px;text-align:center;top:117.5px;font-size:10px;color:#f4f4f4;-webkit-text-stroke:0.45px #f4f4f4">M</div>
<div class="t" style="left:774.9px;width:40px;text-align:center;top:117.5px;font-size:10px;color:#f4f4f4;-webkit-text-stroke:0.45px #f4f4f4">N</div>
<div class="t" style="left:832.7px;width:40px;text-align:center;top:117.5px;font-size:10px;color:#f4f4f4;-webkit-text-stroke:0.45px #f4f4f4">O</div>
<div class="t" style="left:890.5px;width:40px;text-align:center;top:117.5px;font-size:10px;color:#f4f4f4;-webkit-text-stroke:0.45px #f4f4f4">P</div>
<div class="t" style="left:948.3px;width:40px;text-align:center;top:117.5px;font-size:10px;color:#f4f4f4;-webkit-text-stroke:0.45px #f4f4f4">Q</div>
<div class="t" style="left:1006.1px;width:40px;text-align:center;top:117.5px;font-size:10px;color:#f4f4f4;-webkit-text-stroke:0.45px #f4f4f4">R</div>
<div class="t" style="left:1063.9px;width:40px;text-align:center;top:117.5px;font-size:10px;color:#f4f4f4;-webkit-text-stroke:0.45px #f4f4f4">S</div>
<div class="t" style="left:1121.7px;width:40px;text-align:center;top:117.5px;font-size:10px;color:#f4f4f4;-webkit-text-stroke:0.45px #f4f4f4">T</div>
<div class="t" style="left:1179.5px;width:40px;text-align:center;top:117.5px;font-size:10px;color:#f4f4f4;-webkit-text-stroke:0.45px #f4f4f4">U</div>
<div class="t" style="left:1237.3px;width:40px;text-align:center;top:117.5px;font-size:10px;color:#f4f4f4;-webkit-text-stroke:0.45px #f4f4f4">V</div>
<div class="t" style="left:0;width:19px;text-align:center;top:135.10px;font-size:10px;color:#f4f4f4;-webkit-text-stroke:0.45px #f4f4f4;letter-spacing:-0.3px">1</div>
<div class="t" style="left:0;width:19px;text-align:center;top:149.31px;font-size:10px;color:#f4f4f4;-webkit-text-stroke:0.45px #f4f4f4;letter-spacing:-0.3px">2</div>
<div class="t" style="left:0;width:19px;text-align:center;top:163.52px;font-size:10px;color:#f4f4f4;-webkit-text-stroke:0.45px #f4f4f4;letter-spacing:-0.3px">3</div>
<div class="abs" style="left:0;top:174.72px;width:20px;height:14.21px;background:#5b5b5b"></div>
<div class="t" style="left:0;width:19px;text-align:center;top:177.73px;font-size:10px;color:#f4f4f4;-webkit-text-stroke:0.45px #f4f4f4;letter-spacing:-0.3px">4</div>
<div class="t" style="left:0;width:19px;text-align:center;top:191.94px;font-size:10px;color:#f4f4f4;-webkit-text-stroke:0.45px #f4f4f4;letter-spacing:-0.3px">5</div>
<div class="t" style="left:0;width:19px;text-align:center;top:206.15px;font-size:10px;color:#f4f4f4;-webkit-text-stroke:0.45px #f4f4f4;letter-spacing:-0.3px">6</div>
<div class="t" style="left:0;width:19px;text-align:center;top:220.36px;font-size:10px;color:#f4f4f4;-webkit-text-stroke:0.45px #f4f4f4;letter-spacing:-0.3px">7</div>
<div class="t" style="left:0;width:19px;text-align:center;top:234.57px;font-size:10px;color:#f4f4f4;-webkit-text-stroke:0.45px #f4f4f4;letter-spacing:-0.3px">8</div>
<div class="t" style="left:0;width:19px;text-align:center;top:248.78px;font-size:10px;color:#f4f4f4;-webkit-text-stroke:0.45px #f4f4f4;letter-spacing:-0.3px">9</div>
<div class="t" style="left:0;width:19px;text-align:center;top:262.99px;font-size:10px;color:#f4f4f4;-webkit-text-stroke:0.45px #f4f4f4;letter-spacing:-0.3px">10</div>
<div class="t" style="left:0;width:19px;text-align:center;top:277.20px;font-size:10px;color:#f4f4f4;-webkit-text-stroke:0.45px #f4f4f4;letter-spacing:-0.3px">11</div>
<div class="t" style="left:0;width:19px;text-align:center;top:291.41px;font-size:10px;color:#f4f4f4;-webkit-text-stroke:0.45px #f4f4f4;letter-spacing:-0.3px">12</div>
<div class="t" style="left:0;width:19px;text-align:center;top:305.62px;font-size:10px;color:#f4f4f4;-webkit-text-stroke:0.45px #f4f4f4;letter-spacing:-0.3px">13</div>
<div class="t" style="left:0;width:19px;text-align:center;top:319.83px;font-size:10px;color:#f4f4f4;-webkit-text-stroke:0.45px #f4f4f4;letter-spacing:-0.3px">14</div>
<div class="t" style="left:0;width:19px;text-align:center;top:334.04px;font-size:10px;color:#f4f4f4;-webkit-text-stroke:0.45px #f4f4f4;letter-spacing:-0.3px">15</div>
<div class="t" style="left:0;width:19px;text-align:center;top:348.25px;font-size:10px;color:#f4f4f4;-webkit-text-stroke:0.45px #f4f4f4;letter-spacing:-0.3px">16</div>
<div class="t" style="left:0;width:19px;text-align:center;top:362.46px;font-size:10px;color:#f4f4f4;-webkit-text-stroke:0.45px #f4f4f4;letter-spacing:-0.3px">17</div>
<div class="t" style="left:0;width:19px;text-align:center;top:376.67px;font-size:10px;color:#f4f4f4;-webkit-text-stroke:0.45px #f4f4f4;letter-spacing:-0.3px">18</div>
<div class="t" style="left:0;width:19px;text-align:center;top:390.88px;font-size:10px;color:#f4f4f4;-webkit-text-stroke:0.45px #f4f4f4;letter-spacing:-0.3px">19</div>
<div class="t" style="left:0;width:19px;text-align:center;top:405.09px;font-size:10px;color:#f4f4f4;-webkit-text-stroke:0.45px #f4f4f4;letter-spacing:-0.3px">20</div>
<div class="t" style="left:0;width:19px;text-align:center;top:419.30px;font-size:10px;color:#f4f4f4;-webkit-text-stroke:0.45px #f4f4f4;letter-spacing:-0.3px">21</div>
<div class="t" style="left:0;width:19px;text-align:center;top:433.51px;font-size:10px;color:#f4f4f4;-webkit-text-stroke:0.45px #f4f4f4;letter-spacing:-0.3px">22</div>
<div class="t" style="left:0;width:19px;text-align:center;top:447.72px;font-size:10px;color:#f4f4f4;-webkit-text-stroke:0.45px #f4f4f4;letter-spacing:-0.3px">23</div>
<div class="t" style="left:0;width:19px;text-align:center;top:461.93px;font-size:10px;color:#f4f4f4;-webkit-text-stroke:0.45px #f4f4f4;letter-spacing:-0.3px">24</div>
<div class="t" style="left:0;width:19px;text-align:center;top:476.14px;font-size:10px;color:#f4f4f4;-webkit-text-stroke:0.45px #f4f4f4;letter-spacing:-0.3px">25</div>
<div class="t" style="left:0;width:19px;text-align:center;top:490.35px;font-size:10px;color:#f4f4f4;-webkit-text-stroke:0.45px #f4f4f4;letter-spacing:-0.3px">26</div>
<div class="t" style="left:0;width:19px;text-align:center;top:504.56px;font-size:10px;color:#f4f4f4;-webkit-text-stroke:0.45px #f4f4f4;letter-spacing:-0.3px">27</div>
<div class="t" style="left:0;width:19px;text-align:center;top:518.77px;font-size:10px;color:#f4f4f4;-webkit-text-stroke:0.45px #f4f4f4;letter-spacing:-0.3px">28</div>
<div class="t" style="left:0;width:19px;text-align:center;top:532.98px;font-size:10px;color:#f4f4f4;-webkit-text-stroke:0.45px #f4f4f4;letter-spacing:-0.3px">29</div>
<div class="t" style="left:0;width:19px;text-align:center;top:547.19px;font-size:10px;color:#f4f4f4;-webkit-text-stroke:0.45px #f4f4f4;letter-spacing:-0.3px">30</div>
<div class="t" style="left:0;width:19px;text-align:center;top:561.40px;font-size:10px;color:#f4f4f4;-webkit-text-stroke:0.45px #f4f4f4;letter-spacing:-0.3px">31</div>
<div class="t" style="left:0;width:19px;text-align:center;top:575.61px;font-size:10px;color:#f4f4f4;-webkit-text-stroke:0.45px #f4f4f4;letter-spacing:-0.3px">32</div>
<div class="t" style="left:0;width:19px;text-align:center;top:589.82px;font-size:10px;color:#f4f4f4;-webkit-text-stroke:0.45px #f4f4f4;letter-spacing:-0.3px">33</div>
<div class="t" style="left:0;width:19px;text-align:center;top:604.03px;font-size:10px;color:#f4f4f4;-webkit-text-stroke:0.45px #f4f4f4;letter-spacing:-0.3px">34</div>
<div class="t" style="left:0;width:19px;text-align:center;top:618.24px;font-size:10px;color:#f4f4f4;-webkit-text-stroke:0.45px #f4f4f4;letter-spacing:-0.3px">35</div>
<div class="t" style="left:0;width:19px;text-align:center;top:632.45px;font-size:10px;color:#f4f4f4;-webkit-text-stroke:0.45px #f4f4f4;letter-spacing:-0.3px">36</div>
<div class="t" style="left:0;width:19px;text-align:center;top:646.66px;font-size:10px;color:#f4f4f4;-webkit-text-stroke:0.45px #f4f4f4;letter-spacing:-0.3px">37</div>
<div class="t" style="left:0;width:19px;text-align:center;top:660.87px;font-size:10px;color:#f4f4f4;-webkit-text-stroke:0.45px #f4f4f4;letter-spacing:-0.3px">38</div>
<div class="t" style="left:0;width:19px;text-align:center;top:675.08px;font-size:10px;color:#f4f4f4;-webkit-text-stroke:0.45px #f4f4f4;letter-spacing:-0.3px">39</div>
<div class="t" style="left:0;width:19px;text-align:center;top:689.29px;font-size:10px;color:#f4f4f4;-webkit-text-stroke:0.45px #f4f4f4;letter-spacing:-0.3px">40</div>
<div class="t" style="left:0;width:19px;text-align:center;top:703.50px;font-size:10px;color:#f4f4f4;-webkit-text-stroke:0.45px #f4f4f4;letter-spacing:-0.3px">41</div>
<div class="abs" style="left:0;top:145.80px;width:19.5px;height:1px;background:#3a3a3a"></div>
<div class="abs" style="left:0;top:160.01px;width:19.5px;height:1px;background:#3a3a3a"></div>
<div class="abs" style="left:0;top:174.22px;width:19.5px;height:1px;background:#3a3a3a"></div>
<div class="abs" style="left:0;top:188.43px;width:19.5px;height:1px;background:#3a3a3a"></div>
<div class="abs" style="left:0;top:202.64px;width:19.5px;height:1px;background:#3a3a3a"></div>
<div class="abs" style="left:0;top:216.85px;width:19.5px;height:1px;background:#3a3a3a"></div>
<div class="abs" style="left:0;top:231.06px;width:19.5px;height:1px;background:#3a3a3a"></div>
<div class="abs" style="left:0;top:245.27px;width:19.5px;height:1px;background:#3a3a3a"></div>
<div class="abs" style="left:0;top:259.48px;width:19.5px;height:1px;background:#3a3a3a"></div>
<div class="abs" style="left:0;top:273.69px;width:19.5px;height:1px;background:#3a3a3a"></div>
<div class="abs" style="left:0;top:287.90px;width:19.5px;height:1px;background:#3a3a3a"></div>
<div class="abs" style="left:0;top:302.11px;width:19.5px;height:1px;background:#3a3a3a"></div>
<div class="abs" style="left:0;top:316.32px;width:19.5px;height:1px;background:#3a3a3a"></div>
<div class="abs" style="left:0;top:330.53px;width:19.5px;height:1px;background:#3a3a3a"></div>
<div class="abs" style="left:0;top:344.74px;width:19.5px;height:1px;background:#3a3a3a"></div>
<div class="abs" style="left:0;top:358.95px;width:19.5px;height:1px;background:#3a3a3a"></div>
<div class="abs" style="left:0;top:373.16px;width:19.5px;height:1px;background:#3a3a3a"></div>
<div class="abs" style="left:0;top:387.37px;width:19.5px;height:1px;background:#3a3a3a"></div>
<div class="abs" style="left:0;top:401.58px;width:19.5px;height:1px;background:#3a3a3a"></div>
<div class="abs" style="left:0;top:415.79px;width:19.5px;height:1px;background:#3a3a3a"></div>
<div class="abs" style="left:0;top:430.00px;width:19.5px;height:1px;background:#3a3a3a"></div>
<div class="abs" style="left:0;top:444.21px;width:19.5px;height:1px;background:#3a3a3a"></div>
<div class="abs" style="left:0;top:458.42px;width:19.5px;height:1px;background:#3a3a3a"></div>
<div class="abs" style="left:0;top:472.63px;width:19.5px;height:1px;background:#3a3a3a"></div>
<div class="abs" style="left:0;top:486.84px;width:19.5px;height:1px;background:#3a3a3a"></div>
<div class="abs" style="left:0;top:501.05px;width:19.5px;height:1px;background:#3a3a3a"></div>
<div class="abs" style="left:0;top:515.26px;width:19.5px;height:1px;background:#3a3a3a"></div>
<div class="abs" style="left:0;top:529.47px;width:19.5px;height:1px;background:#3a3a3a"></div>
<div class="abs" style="left:0;top:543.68px;width:19.5px;height:1px;background:#3a3a3a"></div>
<div class="abs" style="left:0;top:557.89px;width:19.5px;height:1px;background:#3a3a3a"></div>
<div class="abs" style="left:0;top:572.10px;width:19.5px;height:1px;background:#3a3a3a"></div>
<div class="abs" style="left:0;top:586.31px;width:19.5px;height:1px;background:#3a3a3a"></div>
<div class="abs" style="left:0;top:600.52px;width:19.5px;height:1px;background:#3a3a3a"></div>
<div class="abs" style="left:0;top:614.73px;width:19.5px;height:1px;background:#3a3a3a"></div>
<div class="abs" style="left:0;top:628.94px;width:19.5px;height:1px;background:#3a3a3a"></div>
<div class="abs" style="left:0;top:643.15px;width:19.5px;height:1px;background:#3a3a3a"></div>
<div class="abs" style="left:0;top:657.36px;width:19.5px;height:1px;background:#3a3a3a"></div>
<div class="abs" style="left:0;top:671.57px;width:19.5px;height:1px;background:#3a3a3a"></div>
<div class="abs" style="left:0;top:685.78px;width:19.5px;height:1px;background:#3a3a3a"></div>
<div class="abs" style="left:0;top:699.99px;width:19.5px;height:1px;background:#3a3a3a"></div>
<div class="abs" style="left:0;top:714.20px;width:19.5px;height:1px;background:#3a3a3a"></div>
<div class="abs" style="left:19.3px;top:113px;width:1px;height:18px;background:#6a6a6a"></div>
<svg class="abs" style="left:0;top:113px" width="20" height="18"><polygon points="18,2 18,16 4,16" fill="#555"/></svg>
<div class="abs" style="left:129px;top:173.5px;width:60.3px;height:16.2px;border:2px solid #217346"></div>
<div class="abs" style="left:185.5px;top:187px;width:5px;height:5px;background:#217346"></div>
<div class="abs" style="left:0;top:716px;width:1280px;height:4px;background:#2b2b2b"></div>
<div class="abs" style="left:54px;top:716px;width:70px;height:4px;background:#f4f4f4"></div>
<div class="abs" style="left:373.5px;top:65.3px;width:609.3px;height:574.5px;border-radius:8px;background:#382728;box-shadow:0 12px 40px rgba(0,0,0,0.5),0 0 0 1px rgba(0,0,0,0.6);overflow:hidden">
<div class="abs" style="left:0;top:0;width:609.3px;height:46.4px;background:#443837;border-bottom:1.2px solid #231717"></div>
<div class="abs" style="left:0;top:0;width:609.3px;height:574.5px;border-radius:8px;border:1px solid rgba(255,235,230,0.09)"></div>
</div>
<div class="abs" style="left:390.4px;top:81.8px;width:12px;height:12px;border-radius:50%;background:#fd5f57"></div>
<div class="abs" style="left:408.2px;top:81.8px;width:12px;height:12px;border-radius:50%;background:#5d5250"></div>
<div class="abs" style="left:426px;top:81.8px;width:12px;height:12px;border-radius:50%;background:#5d5250"></div>
<svg class="abs" style="left:460px;top:78px" width="50" height="20"><polyline points="472,2.5 464.5,10 472,17.5" transform="translate(-460,0)" fill="none" stroke="#d8cfce" stroke-width="1.6"/><polyline points="497,2.5 504.5,10 497,17.5" transform="translate(-460,0)" fill="none" stroke="#6e6361" stroke-width="1.6"/></svg>
<svg class="abs" style="left:527px;top:81px" width="18" height="13"><rect x="1.0" y="0.8" width="2.8" height="2.8" fill="#d6cdcc"/><rect x="5.3" y="0.8" width="2.8" height="2.8" fill="#d6cdcc"/><rect x="9.6" y="0.8" width="2.8" height="2.8" fill="#d6cdcc"/><rect x="13.9" y="0.8" width="2.8" height="2.8" fill="#d6cdcc"/><rect x="1.0" y="5.1" width="2.8" height="2.8" fill="#d6cdcc"/><rect x="5.3" y="5.1" width="2.8" height="2.8" fill="#d6cdcc"/><rect x="9.6" y="5.1" width="2.8" height="2.8" fill="#d6cdcc"/><rect x="13.9" y="5.1" width="2.8" height="2.8" fill="#d6cdcc"/><rect x="1.0" y="9.4" width="2.8" height="2.8" fill="#d6cdcc"/><rect x="5.3" y="9.4" width="2.8" height="2.8" fill="#d6cdcc"/><rect x="9.6" y="9.4" width="2.8" height="2.8" fill="#d6cdcc"/><rect x="13.9" y="9.4" width="2.8" height="2.8" fill="#d6cdcc"/></svg>
<div class="t" style="left:557.5px;top:80.8px;font-size:13.4px;font-weight:bold;color:#ece4e3;-webkit-text-stroke:0">Barra multifunzione...</div>
<div class="abs" style="left:719px;top:75px;width:253.5px;height:24.5px;border-radius:4px;background:#473b3a;border:1px solid #4d4140"></div>
<svg class="abs" style="left:722px;top:81px" width="16" height="14"><circle cx="6.5" cy="6" r="4.3" fill="none" stroke="#a89e9c" stroke-width="1.5"/><line x1="9.6" y1="9.2" x2="13" y2="12.5" stroke="#a89e9c" stroke-width="1.7"/></svg>
<div class="t" style="left:742px;top:82.5px;font-size:10.9px;color:#7a6f6e">Cerca</div>
<div class="abs" style="left:390.9px;top:137.6px;width:574.3px;height:459px;border-radius:7px;background:#3e302f;border:1px solid #4c3f3d"></div>
<div class="abs" style="left:541.2px;top:129.4px;width:274.7px;height:18.7px;border-radius:6px;background:#3a2c2b;border:1px solid #4a3d3b"></div>
<div class="abs" style="left:541.2px;top:129.4px;width:124.7px;height:18.7px;border-radius:6px;background:#6a5e5c"></div>
<div class="t" style="left:552px;top:132px;font-size:12px;color:#e9e1e0">Barra multifunzione</div>
<div class="t" style="left:677px;top:132px;font-size:12px;color:#e9e1e0">Barra di accesso rapido</div>
<div class="t" style="left:411.7px;top:172px;font-size:11.3px;color:#e9e1e0">Scegli comandi da:</div>
<div class="t" style="left:723px;top:172px;font-size:11.3px;color:#e9e1e0">Personalizza barra multifunzione:</div>
<div class="abs" style="left:412px;top:187.5px;width:221.4px;height:17.8px;border-radius:5px;background:#6b5f5d"></div>
<div class="abs" style="left:616.8px;top:189px;width:15px;height:14.8px;border-radius:4px;background:#237b4d"></div>
<svg class="abs" style="left:616.8px;top:189px" width="15" height="15"><polyline points="4.5,6 7.5,3.2 10.5,6" fill="none" stroke="#fff" stroke-width="1.3"/><polyline points="4.5,9 7.5,11.8 10.5,9" fill="none" stroke="#fff" stroke-width="1.3"/></svg>
<div class="t" style="left:419px;top:190px;font-size:12px;color:#f0e8e7">Comandi più usati</div>
<div class="abs" style="left:722.7px;top:187.5px;width:221.7px;height:17.8px;border-radius:5px;background:#6b5f5d"></div>
<div class="abs" style="left:927.8px;top:189px;width:15px;height:14.8px;border-radius:4px;background:#237b4d"></div>
<svg class="abs" style="left:927.8px;top:189px" width="15" height="15"><polyline points="4.5,6 7.5,3.2 10.5,6" fill="none" stroke="#fff" stroke-width="1.3"/><polyline points="4.5,9 7.5,11.8 10.5,9" fill="none" stroke="#fff" stroke-width="1.3"/></svg>
<div class="t" style="left:729.7px;top:190px;font-size:12px;color:#f0e8e7">Schede principali</div>
<div class="abs" style="left:632.8px;top:216.8px;width:1px;height:327px;background:#463938"></div>
<div class="abs" style="left:413.3px;top:216.8px;width:219.5px;height:327px;background:#2e2120"></div>
<div class="abs" style="left:724px;top:217px;width:220.3px;height:309.2px;background:#2e2120"></div>
<div class="abs" style="left:722.5px;top:526.2px;width:222.2px;height:18.4px;background:#5b4f4d"></div>
<div class="abs" style="left:745px;top:527px;width:1px;height:17px;background:#4a3f3d"></div>
<div class="abs" style="left:771.3px;top:527px;width:1px;height:17px;background:#4a3f3d"></div>
<div class="abs" style="left:799.4px;top:527px;width:1px;height:17px;background:#4a3f3d"></div>
<svg class="abs" style="left:722px;top:526px" width="80" height="19"><path d="M7.5,9.3 H16.5 M12,4.8 V13.8" stroke="#e0d8d7" stroke-width="1.2"/><path d="M31.5,9.3 H40.5" stroke="#8a7f7d" stroke-width="1.2"/><circle cx="63" cy="9.5" r="5.2" fill="none" stroke="#e0d8d7" stroke-width="1.1"/><circle cx="60.7" cy="9.5" r="0.8" fill="#e0d8d7"/><circle cx="63" cy="9.5" r="0.8" fill="#e0d8d7"/><circle cx="65.3" cy="9.5" r="0.8" fill="#e0d8d7"/></svg>
<div class="t" style="left:723px;top:553px;font-size:10.6px;line-height:12.4px;color:#e9e1e0">Trascinare per ridisporre i comandi all'interno<br>delle schede personalizzate</div>
<div class="abs" style="left:651px;top:357.2px;width:54px;height:17.8px;border-radius:5px;background:#4f4443"></div>
<div class="abs" style="left:651px;top:385.6px;width:54px;height:18.3px;border-radius:5px;background:#4f4443"></div>
<svg class="abs" style="left:651px;top:357px" width="54" height="48"><polyline points="74.5,-3.5 79,1.5 74.5,6.5" transform="translate(-50,7)" fill="none" stroke="#7d7270" stroke-width="1.2"/><polyline points="79,26.5 74.5,31.5 79,36.5" transform="translate(-50,6)" fill="none" stroke="#7d7270" stroke-width="1.2"/></svg>
<div class="abs" style="left:833.3px;top:603.9px;width:63.1px;height:18.3px;border-radius:5px;background:#6b5f5d"></div>
<div class="t" style="left:846.5px;top:607px;font-size:10.8px;color:#f3ebea">Annulla</div>
<div class="abs" style="left:903px;top:603.9px;width:61.8px;height:18.3px;border-radius:5px;background:#4b3f3d"></div>
<div class="t" style="left:921px;top:607px;font-size:10.8px;color:#7f7472">Salva</div>
<div class="abs" style="left:413.3px;top:216.8px;width:219.5px;height:327px;overflow:hidden">
<div class="t" style="left:36.1px;top:6.30px;font-size:11.4px;color:#e9e1e0">Aggiorna tutto</div>
<div class="t" style="left:36.1px;top:27.63px;font-size:11.4px;color:#e9e1e0">Aggiungi o rimuovi filtri</div>
<div class="t" style="left:36.1px;top:48.96px;font-size:11.4px;color:#e9e1e0">Allinea al centro</div>
<div class="t" style="left:36.1px;top:70.29px;font-size:11.4px;color:#e9e1e0">Apice</div>
<div class="t" style="left:36.1px;top:91.62px;font-size:11.4px;color:#e9e1e0">Apri</div>
<div class="t" style="left:36.1px;top:112.95px;font-size:11.4px;color:#e9e1e0">Aumenta dimensione carattere</div>
<div class="t" style="left:36.1px;top:134.28px;font-size:11.4px;color:#e9e1e0">Bordi</div>
<div class="t" style="left:36.1px;top:155.61px;font-size:11.4px;color:#e9e1e0">Colore carattere</div>
<div class="t" style="left:36.1px;top:176.94px;font-size:11.4px;color:#e9e1e0">Colore riempimento</div>
<div class="t" style="left:36.1px;top:198.27px;font-size:11.4px;color:#e9e1e0">Controllo ortografia...</div>
<div class="t" style="left:36.1px;top:219.60px;font-size:11.4px;color:#e9e1e0">Copia</div>
<div class="t" style="left:36.1px;top:240.93px;font-size:11.4px;color:#e9e1e0">Copia formato</div>
<div class="t" style="left:36.1px;top:262.26px;font-size:11.4px;color:#e9e1e0">Dimensione carattere</div>
<div class="t" style="left:36.1px;top:283.59px;font-size:11.4px;color:#e9e1e0">Elimina celle...</div>
<div class="t" style="left:36.1px;top:304.92px;font-size:11.4px;color:#e9e1e0">Elimina colonne foglio</div>
<div class="t" style="left:36.1px;top:323.05px;font-size:11.4px;color:#e9e1e0">Elimina righe foglio</div>
</div>
<div class="abs" style="left:413.3px;top:216.8px;width:219.5px;height:327px;overflow:hidden">
<div class="abs" style="left:-413.3px;top:-216.8px;width:1280px;height:720px"><svg class="abs" style="left:431px;top:219.60px" width="17" height="16" viewBox="0 0 17 16"><path d="M1.5,2.5 V14 M3.5,1 H8.5 L10.5,3 V5.5" fill="none" stroke="#d8d0cf" stroke-width="1"/><path d="M3.5,1 V14.5 H6.5" fill="none" stroke="#d8d0cf" stroke-width="1"/><path d="M7.5,9.5 A3.6,3.6 0 0 1 14,8.2 M14.5,11.5 A3.6,3.6 0 0 1 8,12.8" fill="none" stroke="#3fa45f" stroke-width="1.4"/><path d="M14.6,6 V9 H11.8 M7.4,15 V12 H10.2" fill="none" stroke="#3fa45f" stroke-width="1.1"/></svg><svg class="abs" style="left:431px;top:240.93px" width="16" height="16" viewBox="0 0 16 16"><path d="M1,1.5 H15 L9.5,8 V15 H6.5 V8 Z" fill="none" stroke="#d8d0cf" stroke-width="1.1"/></svg><svg class="abs" style="left:432px;top:263.26px" width="15" height="14" viewBox="0 0 15 14"><path d="M0.5,1.5 H13.5 M2.5,5 H11.5 M0.5,9 H13.5" stroke="#d8d0cf" stroke-width="1.1"/><path d="M2.5,12.5 H11.5" stroke="#6b6160" stroke-width="1.1"/></svg><svg class="abs" style="left:432px;top:284.59px" width="14" height="14" viewBox="0 0 14 14"><text x="1.5" y="11" font-size="10" font-family="Liberation Sans" fill="#d8d0cf">x</text><text x="8.5" y="5" font-size="5" font-family="Liberation Sans" fill="#5c8ec0">1</text></svg><svg class="abs" style="left:430px;top:305.92px" width="18" height="14" viewBox="0 0 18 14"><path d="M1.5,2 H6 L7.5,3.5 H13 V5.5 M1.5,2 V12.5 H13 L16,6 H4 L1.5,12" fill="none" stroke="#d8d0cf" stroke-width="1.1"/></svg><svg class="abs" style="left:431px;top:326.25px" width="17" height="16" viewBox="0 0 17 16"><text x="0" y="14" font-size="14.5" font-family="Liberation Sans" fill="#d8d0cf">A</text><path d="M11,4 L13,2 L15,4" fill="none" stroke="#b0a6a5" stroke-width="0.9"/></svg><svg class="abs" style="left:431px;top:347.58px" width="16" height="16" viewBox="0 0 16 16"><rect x="1" y="1" width="13.5" height="13" fill="none" stroke="#9f9594" stroke-width="0.9" stroke-dasharray="1.4,1"/><path d="M7.75,1 V14 M1,7.5 H14.5" stroke="#9f9594" stroke-width="0.9" stroke-dasharray="1.4,1"/><path d="M0.5,14.5 H15" stroke="#d8d0cf" stroke-width="1.3"/></svg><svg class="abs" style="left:431px;top:368.41px" width="16" height="17" viewBox="0 0 16 17"><text x="1.5" y="12" font-size="13" font-family="Liberation Sans" fill="#d8d0cf">A</text><rect x="0.5" y="13" width="15" height="3.5" fill="#d8d0cf"/></svg><svg class="abs" style="left:431px;top:389.74px" width="16" height="17" viewBox="0 0 16 17"><path d="M3,7 L8,2 L12.5,6.5 L7.5,11.5 Z" fill="none" stroke="#d8d0cf" stroke-width="1.1"/><path d="M8,2 V0.5 M12,4.5 Q14.5,7 13.5,9" fill="none" stroke="#d8d0cf" stroke-width="1"/><rect x="0.5" y="13" width="15" height="3.5" fill="#d8d0cf"/></svg><svg class="abs" style="left:431px;top:411.07px" width="17" height="17" viewBox="0 0 17 17"><text x="0.5" y="7" font-size="7.5" font-family="Liberation Sans" fill="#aaa09f">abc</text><path d="M3,11 L6,14 L12.5,8" fill="none" stroke="#3fa45f" stroke-width="1.5"/></svg><svg class="abs" style="left:431px;top:432.90px" width="16" height="16" viewBox="0 0 16 16"><path d="M1,1 H7 V13 H1 Z" fill="none" stroke="#d8d0cf" stroke-width="1"/><path d="M5.5,4.5 H11 L14.5,8 V15 H5.5 Z" fill="#2e2120" stroke="#d8d0cf" stroke-width="1"/><path d="M8,12 H11" stroke="#aaa" stroke-width="0.8"/></svg><svg class="abs" style="left:430px;top:453.73px" width="18" height="17" viewBox="0 0 18 17"><path d="M1,9.5 L7.5,4 L12,9 L6,15 Q3,13 1,9.5 Z" fill="#e3b341"/><path d="M9.5,6.5 L15,1.5 L17,3.5 L12,9" fill="none" stroke="#d8d0cf" stroke-width="1.1"/></svg><svg class="abs" style="left:430px;top:496.89px" width="17" height="16" viewBox="0 0 17 16"><path d="M1,1.5 H15 M1,14.5 H15 M1,1.5 V5 M15,1.5 V5 M1,11 V14.5 M15,11 V14.5" stroke="#d8d0cf" stroke-width="1"/><rect x="4" y="5.5" width="6" height="5" fill="#2f7fd0"/><path d="M10.5,5.5 L15,10.5 M15,5.5 L10.5,10.5" stroke="#d03a3a" stroke-width="1.3"/></svg><svg class="abs" style="left:430px;top:517.22px" width="17" height="18" viewBox="0 0 17 18"><path d="M1.5,1 V9 H15 V1" fill="none" stroke="#d8d0cf" stroke-width="1"/><rect x="6" y="1" width="4.5" height="8" fill="#2f7fd0"/><path d="M6,12 L10.5,16.5 M10.5,12 L6,16.5" stroke="#d03a3a" stroke-width="1.3"/></svg><svg class="abs" style="left:431px;top:540.55px" width="10" height="14" viewBox="0 0 10 14"><path d="M1,2 H7 V6" fill="none" stroke="#d8d0cf" stroke-width="1"/></svg><div class="abs" style="left:613px;top:350.58px;width:1px;height:10px;background:#463a39"></div><svg class="abs" style="left:617px;top:352.58px" width="6" height="6"><polygon points="0.5,0.5 5,3 0.5,5.5" fill="#d8d0cf"/></svg><div class="abs" style="left:613px;top:371.91px;width:1px;height:10px;background:#463a39"></div><svg class="abs" style="left:617px;top:373.91px" width="6" height="6"><polygon points="0.5,0.5 5,3 0.5,5.5" fill="#d8d0cf"/></svg><div class="abs" style="left:613px;top:393.24px;width:1px;height:10px;background:#463a39"></div><svg class="abs" style="left:617px;top:395.24px" width="6" height="6"><polygon points="0.5,0.5 5,3 0.5,5.5" fill="#d8d0cf"/></svg><div class="abs" style="left:613.5px;top:478.56px;width:11px;height:10px;border-radius:2px;background:#6b605e"></div><svg class="abs" style="left:613.5px;top:478.56px" width="11" height="10"><path d="M3,2 V8" stroke="#2e2120" stroke-width="1"/><polygon points="5.5,3 8.5,5 5.5,7" fill="#e0d8d7"/></svg></div>
</div>
<div class="abs" style="left:724px;top:217px;width:220.3px;height:309.2px;overflow:hidden">
<svg class="abs" style="left:16.3px;top:-4.53px" width="7" height="10"><polyline points="1.2,1.2 5,4.6 1.2,8" fill="none" stroke="#bfb5b3" stroke-width="1.2"/></svg>
<div class="t" style="left:26.3px;top:-4.83px;font-size:11.4px;color:#e9e1e0">Numero</div>
<svg class="abs" style="left:16.3px;top:16.80px" width="7" height="10"><polyline points="1.2,1.2 5,4.6 1.2,8" fill="none" stroke="#bfb5b3" stroke-width="1.2"/></svg>
<div class="t" style="left:26.3px;top:16.50px;font-size:11.4px;color:#e9e1e0">Stili</div>
<svg class="abs" style="left:16.3px;top:38.13px" width="7" height="10"><polyline points="1.2,1.2 5,4.6 1.2,8" fill="none" stroke="#bfb5b3" stroke-width="1.2"/></svg>
<div class="t" style="left:26.3px;top:37.83px;font-size:11.4px;color:#e9e1e0">Celle</div>
<svg class="abs" style="left:16.3px;top:59.46px" width="7" height="10"><polyline points="1.2,1.2 5,4.6 1.2,8" fill="none" stroke="#bfb5b3" stroke-width="1.2"/></svg>
<div class="t" style="left:26.3px;top:59.16px;font-size:11.4px;color:#e9e1e0">Modifica</div>
<svg class="abs" style="left:16.3px;top:80.79px" width="7" height="10"><polyline points="1.2,1.2 5,4.6 1.2,8" fill="none" stroke="#bfb5b3" stroke-width="1.2"/></svg>
<div class="t" style="left:26.3px;top:80.49px;font-size:11.4px;color:#e9e1e0">Analisi</div>
<svg class="abs" style="left:16.3px;top:102.12px" width="7" height="10"><polyline points="1.2,1.2 5,4.6 1.2,8" fill="none" stroke="#bfb5b3" stroke-width="1.2"/></svg>
<div class="t" style="left:26.3px;top:101.82px;font-size:11.4px;color:#e9e1e0">Riservatezza</div>
<svg class="abs" style="left:16.3px;top:123.45px" width="7" height="10"><polyline points="1.2,1.2 5,4.6 1.2,8" fill="none" stroke="#bfb5b3" stroke-width="1.2"/></svg>
<div class="t" style="left:26.3px;top:123.15px;font-size:11.4px;color:#e9e1e0">Opzioni risparmio energia</div>
<svg class="abs" style="left:4.8px;top:144.78px" width="7" height="10"><polyline points="1.2,1.2 5,4.6 1.2,8" fill="none" stroke="#bfb5b3" stroke-width="1.2"/></svg>
<div class="abs" style="left:15.7px;top:142.88px;width:12.6px;height:12.6px;border-radius:3px;background:#22784a"></div>
<svg class="abs" style="left:15.7px;top:142.88px" width="13" height="13"><polyline points="3,6.6 5.4,9.4 10.2,3.3" fill="none" stroke="#fff" stroke-width="1.6"/></svg>
<div class="t" style="left:30.7px;top:144.48px;font-size:11.4px;color:#e9e1e0">Inserisci</div>
<svg class="abs" style="left:4.8px;top:166.11px" width="7" height="10"><polyline points="1.2,1.2 5,4.6 1.2,8" fill="none" stroke="#bfb5b3" stroke-width="1.2"/></svg>
<div class="abs" style="left:15.7px;top:164.21px;width:12.6px;height:12.6px;border-radius:3px;background:#22784a"></div>
<svg class="abs" style="left:15.7px;top:164.21px" width="13" height="13"><polyline points="3,6.6 5.4,9.4 10.2,3.3" fill="none" stroke="#fff" stroke-width="1.6"/></svg>
<div class="t" style="left:30.7px;top:165.81px;font-size:11.4px;color:#e9e1e0">Disegno</div>
<svg class="abs" style="left:4.8px;top:187.44px" width="7" height="10"><polyline points="1.2,1.2 5,4.6 1.2,8" fill="none" stroke="#bfb5b3" stroke-width="1.2"/></svg>
<div class="abs" style="left:15.7px;top:185.54px;width:12.6px;height:12.6px;border-radius:3px;background:#22784a"></div>
<svg class="abs" style="left:15.7px;top:185.54px" width="13" height="13"><polyline points="3,6.6 5.4,9.4 10.2,3.3" fill="none" stroke="#fff" stroke-width="1.6"/></svg>
<div class="t" style="left:30.7px;top:187.14px;font-size:11.4px;color:#e9e1e0">Layout di pagina</div>
<svg class="abs" style="left:4.8px;top:208.77px" width="7" height="10"><polyline points="1.2,1.2 5,4.6 1.2,8" fill="none" stroke="#bfb5b3" stroke-width="1.2"/></svg>
<div class="abs" style="left:15.7px;top:206.87px;width:12.6px;height:12.6px;border-radius:3px;background:#22784a"></div>
<svg class="abs" style="left:15.7px;top:206.87px" width="13" height="13"><polyline points="3,6.6 5.4,9.4 10.2,3.3" fill="none" stroke="#fff" stroke-width="1.6"/></svg>
<div class="t" style="left:30.7px;top:208.47px;font-size:11.4px;color:#e9e1e0">Formule</div>
<svg class="abs" style="left:4.8px;top:230.10px" width="7" height="10"><polyline points="1.2,1.2 5,4.6 1.2,8" fill="none" stroke="#bfb5b3" stroke-width="1.2"/></svg>
<div class="abs" style="left:15.7px;top:228.20px;width:12.6px;height:12.6px;border-radius:3px;background:#22784a"></div>
<svg class="abs" style="left:15.7px;top:228.20px" width="13" height="13"><polyline points="3,6.6 5.4,9.4 10.2,3.3" fill="none" stroke="#fff" stroke-width="1.6"/></svg>
<div class="t" style="left:30.7px;top:229.80px;font-size:11.4px;color:#e9e1e0">Dati</div>
<svg class="abs" style="left:4.8px;top:251.43px" width="7" height="10"><polyline points="1.2,1.2 5,4.6 1.2,8" fill="none" stroke="#bfb5b3" stroke-width="1.2"/></svg>
<div class="abs" style="left:15.7px;top:249.53px;width:12.6px;height:12.6px;border-radius:3px;background:#22784a"></div>
<svg class="abs" style="left:15.7px;top:249.53px" width="13" height="13"><polyline points="3,6.6 5.4,9.4 10.2,3.3" fill="none" stroke="#fff" stroke-width="1.6"/></svg>
<div class="t" style="left:30.7px;top:251.13px;font-size:11.4px;color:#e9e1e0">Revisione</div>
<svg class="abs" style="left:4.8px;top:272.76px" width="7" height="10"><polyline points="1.2,1.2 5,4.6 1.2,8" fill="none" stroke="#bfb5b3" stroke-width="1.2"/></svg>
<div class="abs" style="left:15.7px;top:270.86px;width:12.6px;height:12.6px;border-radius:3px;background:#22784a"></div>
<svg class="abs" style="left:15.7px;top:270.86px" width="13" height="13"><polyline points="3,6.6 5.4,9.4 10.2,3.3" fill="none" stroke="#fff" stroke-width="1.6"/></svg>
<div class="t" style="left:30.7px;top:272.46px;font-size:11.4px;color:#e9e1e0">Visualizza</div>
<svg class="abs" style="left:4.8px;top:294.09px" width="7" height="10"><polyline points="1.2,1.2 5,4.6 1.2,8" fill="none" stroke="#bfb5b3" stroke-width="1.2"/></svg>
<div class="abs" style="left:15.7px;top:292.19px;width:12.6px;height:12.6px;border-radius:3px;background:#22784a"></div>
<svg class="abs" style="left:15.7px;top:292.19px" width="13" height="13"><polyline points="3,6.6 5.4,9.4 10.2,3.3" fill="none" stroke="#fff" stroke-width="1.6"/></svg>
<div class="t" style="left:30.7px;top:293.79px;font-size:11.4px;color:#e9e1e0">Sviluppo</div>
</div>
<svg class="abs" style="left:0;top:0" width="1280" height="720"><path d="M859.60,522.30 L859.50,524.15 L859.19,525.68 L858.68,527.10 L857.96,528.45 L857.04,529.74 L855.92,530.98 L854.61,532.17 L853.09,533.32 L851.38,534.43 L849.48,535.49 L847.39,536.51 L845.11,537.48 L842.65,538.41 L840.01,539.29 L837.20,540.13 L834.21,540.92 L831.06,541.66 L827.74,542.34 L824.26,542.98 L820.62,543.57 L816.83,544.10 L812.88,544.58 L808.77,545.00 L804.51,545.37 L800.08,545.68 L795.47,545.94 L790.66,546.14 L785.58,546.29 L780.12,546.37 L773.50,546.40 L766.88,546.37 L761.42,546.29 L756.34,546.14 L751.53,545.94 L746.92,545.68 L742.49,545.37 L738.23,545.00 L734.12,544.58 L730.17,544.10 L726.38,543.57 L722.74,542.98 L719.26,542.34 L715.94,541.66 L712.79,540.92 L709.80,540.13 L706.99,539.29 L704.35,538.41 L701.89,537.48 L699.61,536.51 L697.52,535.49 L695.62,534.43 L693.91,533.32 L692.39,532.17 L691.08,530.98 L689.96,529.74 L689.04,528.45 L688.32,527.10 L687.81,525.68 L687.50,524.15 L687.40,522.30 L687.50,520.45 L687.81,518.92 L688.32,517.50 L689.04,516.15 L689.96,514.86 L691.08,513.62 L692.39,512.43 L693.91,511.28 L695.62,510.17 L697.52,509.11 L699.61,508.09 L701.89,507.12 L704.35,506.19 L706.99,505.31 L709.80,504.47 L712.79,503.68 L715.94,502.94 L719.26,502.26 L722.74,501.62 L726.38,501.03 L730.17,500.50 L734.12,500.02 L738.23,499.60 L742.49,499.23 L746.92,498.92 L751.53,498.66 L756.34,498.46 L761.42,498.31 L766.88,498.23 L773.50,498.20 L780.12,498.23 L785.58,498.31 L790.66,498.46 L795.47,498.66 L800.08,498.92 L804.51,499.23 L808.77,499.60 L812.88,500.02 L816.83,500.50 L820.62,501.03 L824.26,501.62 L827.74,502.26 L831.06,502.94 L834.21,503.68 L837.20,504.47 L840.01,505.31 L842.65,506.19 L845.11,507.12 L847.39,508.09 L849.48,509.11 L851.38,510.17 L853.09,511.28 L854.61,512.43 L855.92,513.62 L857.04,514.86 L857.96,516.15 L858.68,517.50 L859.19,518.92 L859.50,520.45 Z M852.20,520.80 L852.11,522.08 L851.83,523.14 L851.36,524.13 L850.71,525.06 L849.87,525.96 L848.86,526.81 L847.66,527.64 L846.28,528.44 L844.72,529.20 L842.99,529.94 L841.09,530.65 L839.02,531.32 L836.78,531.96 L834.39,532.58 L831.83,533.15 L829.11,533.70 L826.24,534.21 L823.23,534.69 L820.06,535.13 L816.75,535.54 L813.30,535.91 L809.71,536.24 L805.98,536.53 L802.10,536.79 L798.07,537.00 L793.88,537.18 L789.50,537.32 L784.89,537.42 L779.92,537.48 L773.90,537.50 L767.88,537.48 L762.91,537.42 L758.30,537.32 L753.92,537.18 L749.73,537.00 L745.70,536.79 L741.82,536.53 L738.09,536.24 L734.50,535.91 L731.05,535.54 L727.74,535.13 L724.57,534.69 L721.56,534.21 L718.69,533.70 L715.97,533.15 L713.41,532.58 L711.02,531.96 L708.78,531.32 L706.71,530.65 L704.81,529.94 L703.08,529.20 L701.52,528.44 L700.14,527.64 L698.94,526.81 L697.93,525.96 L697.09,525.06 L696.44,524.13 L695.97,523.14 L695.69,522.08 L695.60,520.80 L695.69,519.52 L695.97,518.46 L696.44,517.47 L697.09,516.54 L697.93,515.64 L698.94,514.79 L700.14,513.96 L701.52,513.16 L703.08,512.40 L704.81,511.66 L706.71,510.95 L708.78,510.28 L711.02,509.64 L713.41,509.02 L715.97,508.45 L718.69,507.90 L721.56,507.39 L724.57,506.91 L727.74,506.47 L731.05,506.06 L734.50,505.69 L738.09,505.36 L741.82,505.07 L745.70,504.81 L749.73,504.60 L753.92,504.42 L758.30,504.28 L762.91,504.18 L767.88,504.12 L773.90,504.10 L779.92,504.12 L784.89,504.18 L789.50,504.28 L793.88,504.42 L798.07,504.60 L802.10,504.81 L805.98,505.07 L809.71,505.36 L813.30,505.69 L816.75,506.06 L820.06,506.47 L823.23,506.91 L826.24,507.39 L829.11,507.90 L831.83,508.45 L834.39,509.02 L836.78,509.64 L839.02,510.28 L841.09,510.95 L842.99,511.66 L844.72,512.40 L846.28,513.16 L847.66,513.96 L848.86,514.79 L849.87,515.64 L850.71,516.54 L851.36,517.47 L851.83,518.46 L852.11,519.52 Z" fill="#f62b14" fill-rule="evenodd"/></svg>
</body></html>
